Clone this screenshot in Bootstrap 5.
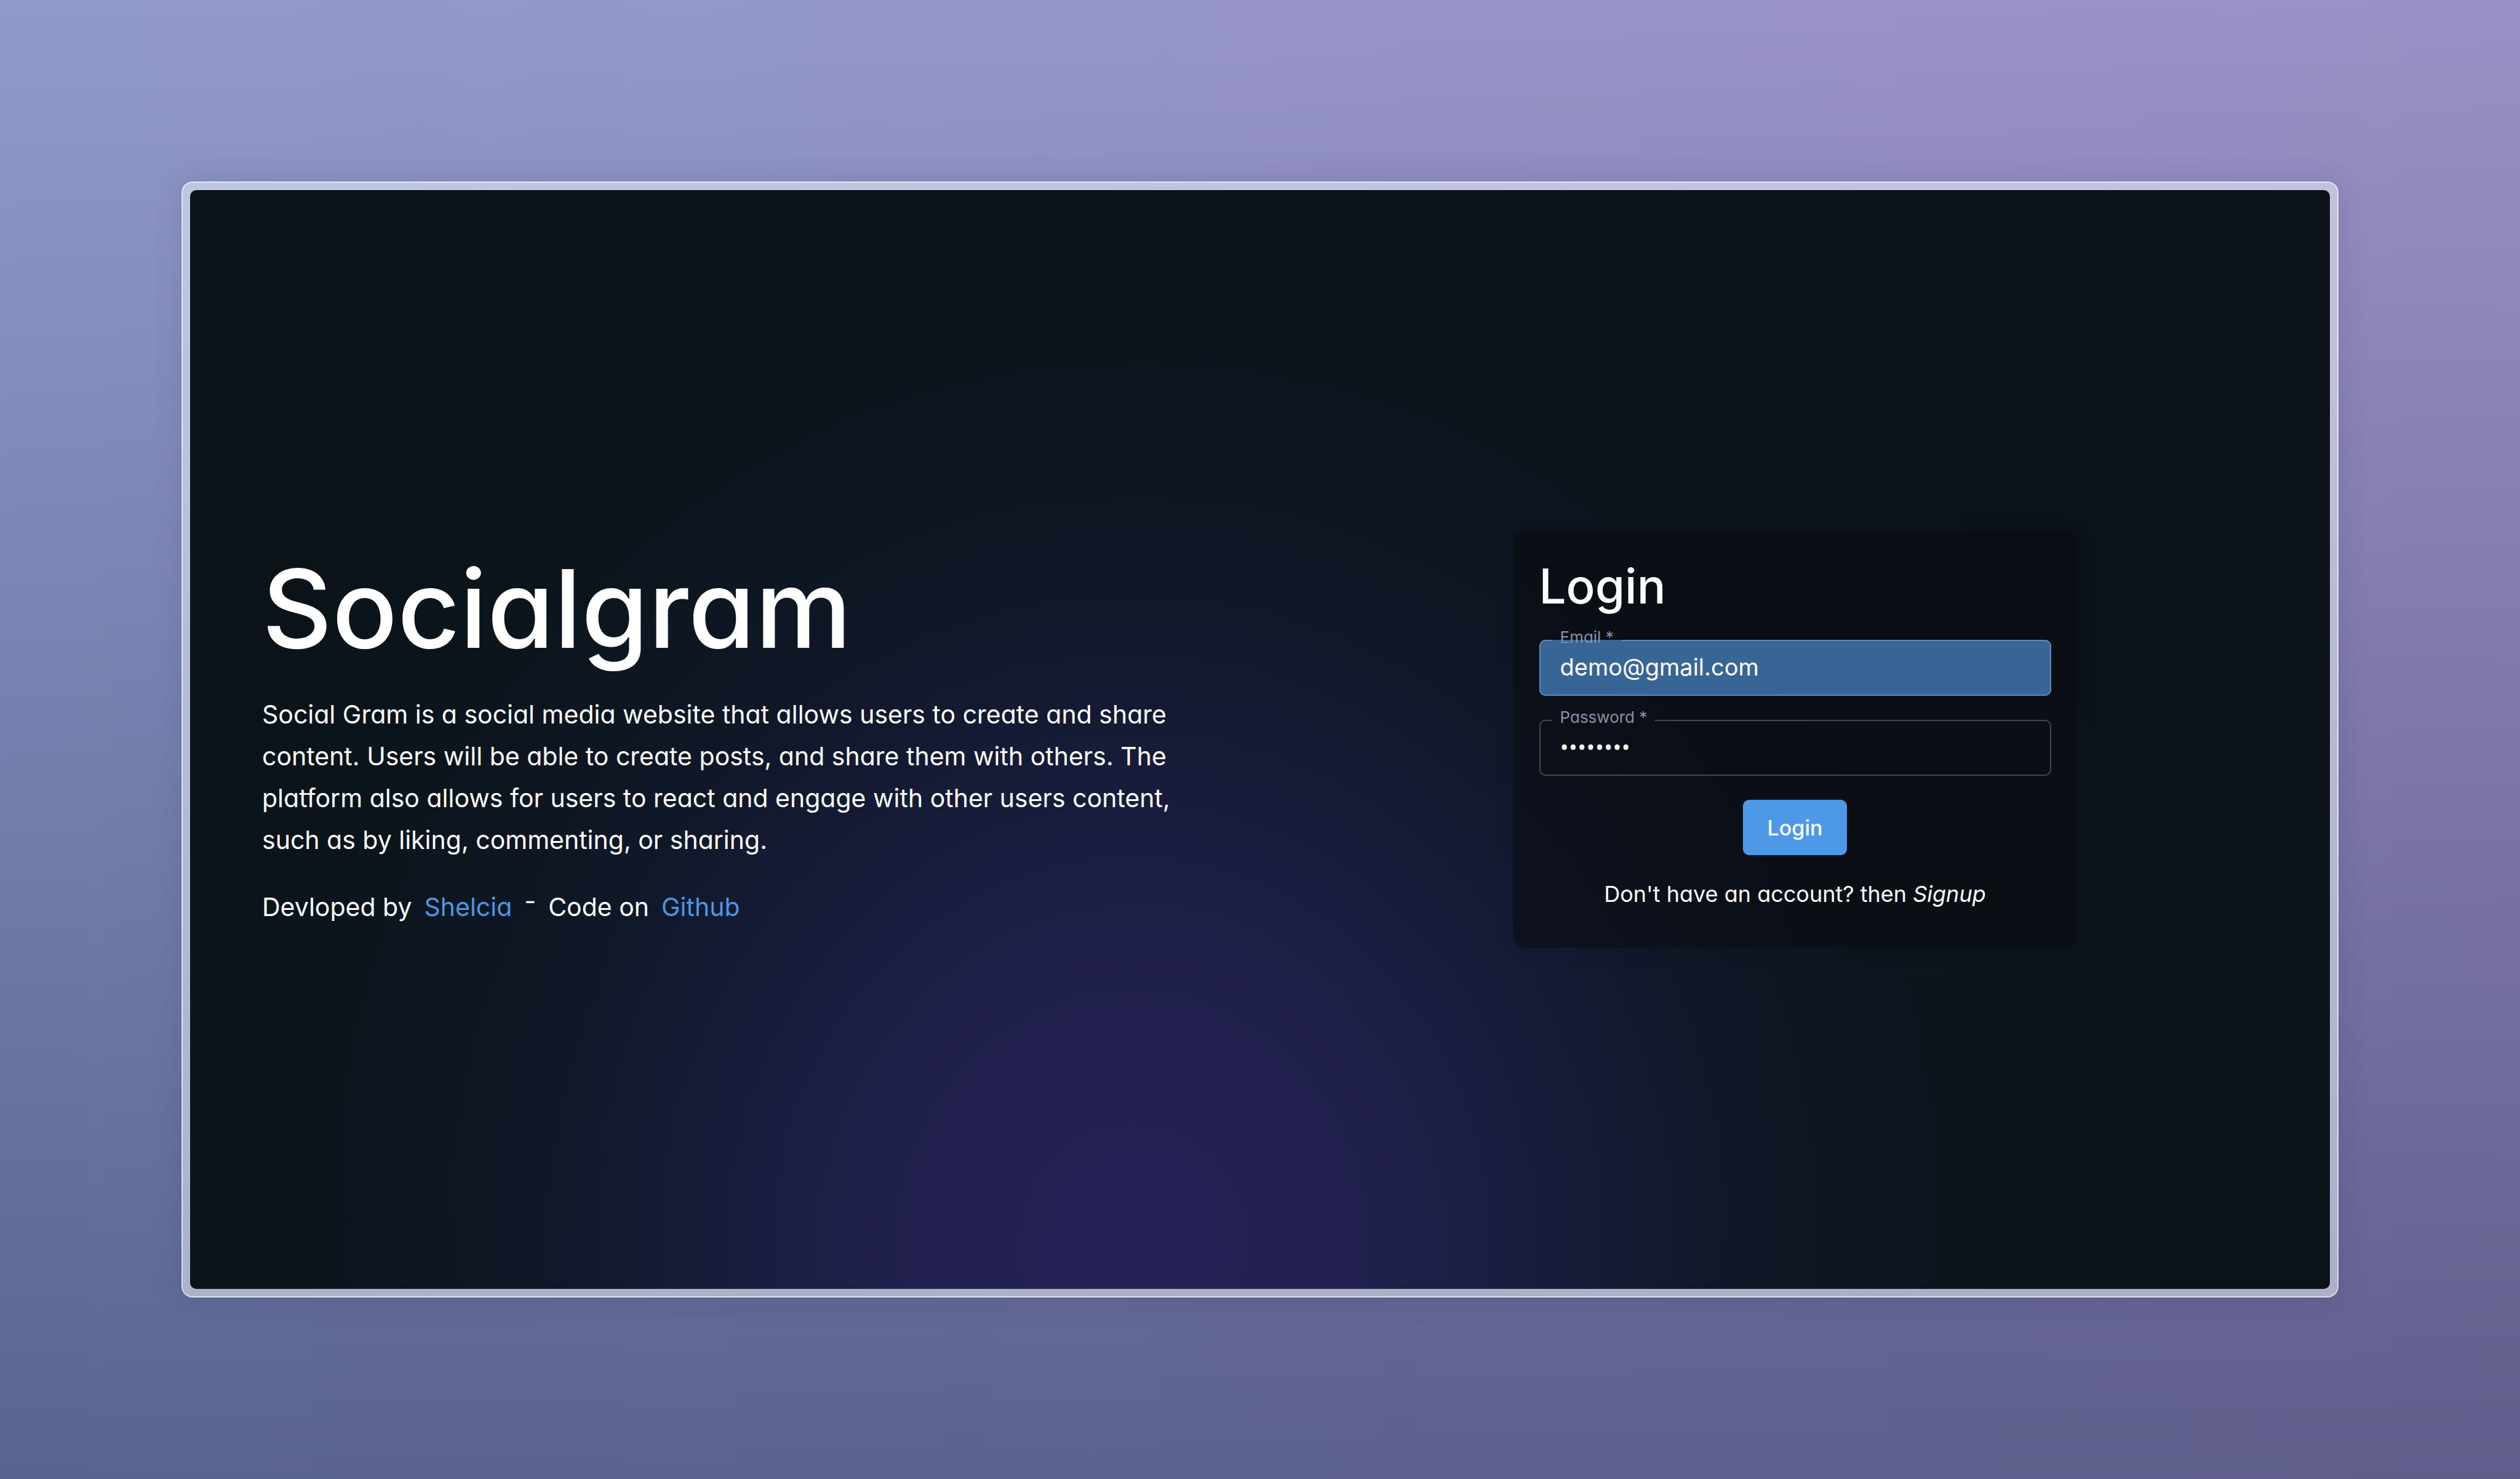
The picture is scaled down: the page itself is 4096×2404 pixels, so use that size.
<!DOCTYPE html>
<html lang="en">
<head>
<meta charset="utf-8">
<meta name="viewport" content="width=device-width, initial-scale=1">
<title>Socialgram - Login</title>
<link href="https://cdn.jsdelivr.net/npm/bootstrap@5.3.0/dist/css/bootstrap.min.css" rel="stylesheet">
<style>
  body {
    min-height: 100vh;
    padding: 295px;
    color: #fff;
    font-family: Inter, "Liberation Sans", sans-serif;
    font-feature-settings: "cv11";
    font-size: 41px;
    line-height: 68px;
    background:
      linear-gradient(to bottom, #fff, rgb(157, 166, 180)),
      linear-gradient(to right, #909bcb, #9795c9 50%, #9b90c5);
    background-blend-mode: multiply;
  }
  .window-frame {
    padding: 12px;
    border: 2px solid rgba(240, 246, 255, .85);
    border-radius: 18px;
    background: rgba(238, 246, 246, .52);
    background-clip: padding-box;
    box-shadow: 0 0 48px rgba(40, 40, 100, .14);
  }
  .login-screen {
    border-radius: 10px;
    background:
      radial-gradient(ellipse 39% 84% at 44% 97%, #252256 0%, rgba(36, 34, 84, .92) 25%, rgba(30, 32, 76, .66) 48%, rgba(23, 27, 58, .34) 72%, rgba(14, 22, 36, 0) 100%),
      radial-gradient(ellipse 56% 100% at 46% 80%, #0e1724 0%, #0c151c 65%, #0b1218 100%);
  }
  .intro-col { padding-left: 117px; }
  .brand-title { font-size: 176px; line-height: 184px; font-weight: 500; margin-bottom: 46px; }
  .brand-text { max-width: 1540px; margin-bottom: 41px; }
  .credits { gap: 20px; }
  .credits a { color: #4d96e3; }
  .credits span { line-height: 48px; }
  .login-card {
    width: 916px;
    padding: 42px 42px 63px;
    border-radius: 16px;
    background: rgba(8, 12, 16, .6);
    box-shadow: 0 4px 32px rgba(0, 0, 0, .1);
  }
  .login-title { font-size: 78px; line-height: 94px; font-weight: 500; margin-bottom: 23px; }
  .field-box { border: 2px solid #45494c; border-radius: 10px; margin-bottom: 22px; }
  .field-box legend {
    float: none;
    width: auto;
    margin: 0 0 0 19px;
    padding: 0 13px 10px;
    font-size: 26px;
    line-height: 26px;
    color: #8b90a8;
  }
  .field-box label { display: block; }
  .field-box input {
    display: block;
    width: 100%;
    height: 50px;
    margin-bottom: 20px;
    padding: 0 32px;
    border: 0;
    outline: 0;
    color: #fff;
    background: none;
    font-size: 38px;
    line-height: 50px;
  }
  .field-box input[type=password] { font-family: "Open Sans", sans-serif; }
  .field-filled { background: #376696; border-color: #6889ad; }
  .login-btn {
    height: 90px;
    margin-top: 17px;
    padding: 0 40px;
    border: 0;
    border-radius: 10px;
    background: #4d99e8;
    color: #fff;
    font-size: 34px;
    font-weight: 500;
  }
  .signup-line { margin: 39px 0 0; font-size: 36px; line-height: 48px; }
</style>
</head>
<body class="d-flex">
<main class="window-frame d-flex flex-fill">
  <div class="login-screen container-fluid d-flex p-0">
    <div class="row g-0 flex-fill align-items-center">
      <section class="col-6 intro-col">
        <h1 class="brand-title">Socialgram</h1>
        <p class="brand-text">Social Gram is a social media website that allows users to create and share content. Users will be able to create posts, and share them with others. The platform also allows for users to react and engage with other users content, such as by liking, commenting, or sharing.</p>
        <div class="credits d-flex">
          <div>Devloped by</div>
          <a class="text-decoration-none" href="#">Shelcia</a>
          <span>-</span>
          <div>Code on</div>
          <a class="text-decoration-none" href="#">Github</a>
        </div>
      </section>
      <section class="col-6 d-flex justify-content-center">
        <form class="login-card">
          <h2 class="login-title">Login</h2>
          <fieldset class="field-box field-filled">
            <legend><label for="email">Email *</label></legend>
            <input type="email" id="email" value="demo@gmail.com">
          </fieldset>
          <fieldset class="field-box">
            <legend><label for="password">Password *</label></legend>
            <input type="password" id="password" value="demo1234">
          </fieldset>
          <div class="text-center">
            <button type="button" class="btn login-btn">Login</button>
            <p class="signup-line">Don't have an account? then <a class="text-reset text-decoration-none fst-italic" href="#">Signup</a></p>
          </div>
        </form>
      </section>
    </div>
  </div>
</main>
<script src="https://cdn.jsdelivr.net/npm/bootstrap@5.3.0/dist/js/bootstrap.bundle.min.js"></script>
</body>
</html>
